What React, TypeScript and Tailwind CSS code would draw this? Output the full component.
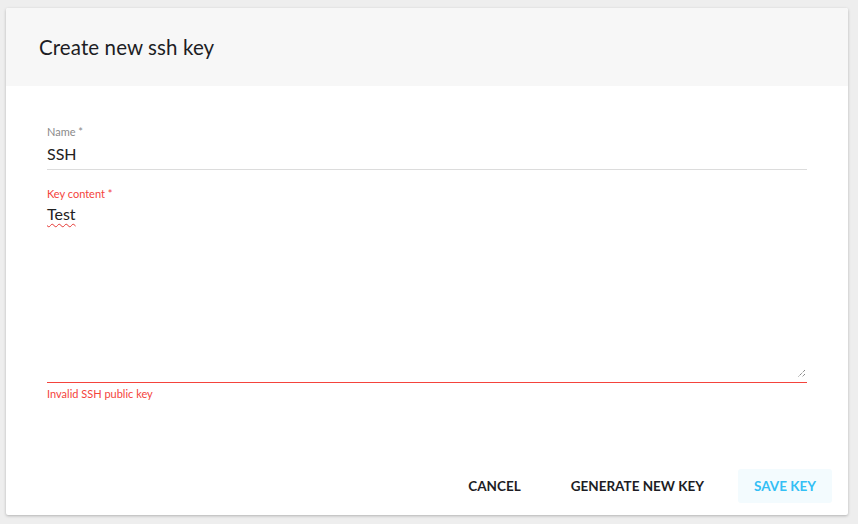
import React from 'react';

const font = { fontFamily: 'Lato, "Open Sans", Arial, sans-serif' };

function ResizeHandle() {
  return (
    <svg width="9" height="9" viewBox="0 0 9 9" className="absolute right-[1px] bottom-[4px]">
      <path d="M8 1 L1 8 M8 5 L5 8" stroke="#555" strokeWidth="1" strokeDasharray="1 1" fill="none" />
    </svg>
  );
}

export default function App() {
  return (
    <div className="min-h-[524px] w-[858px] bg-[#eeeeee] pt-[8px] pl-[6px]" style={font}>
      <div className="w-[842px] h-[507px] bg-white rounded-[2px] shadow-[0_1px_3px_rgba(0,0,0,0.25)] flex flex-col overflow-hidden">
        {/* header */}
        <div className="h-[78px] bg-[#f7f7f7] flex items-center px-[33px]">
          <h1 className="text-[20.5px] text-[#1d1d24] font-normal tracking-[0.1px]">Create new ssh key</h1>
        </div>

        {/* body */}
        <div className="flex-1 flex flex-col px-[41px] pt-[39px]">
          <div className="flex flex-col">
            <label className="text-[11px] leading-[13px] text-[#8a8a8a]">Name *</label>
            <div className="text-[16px] leading-[20px] text-[#222] mt-[6px] pb-[5px] border-b border-[#dcdcdc]">SSH</div>
          </div>

          <div className="flex flex-col mt-[17px]">
            <label className="text-[11px] leading-[13px] text-[#f4433c]">Key content *</label>
            <div className="relative h-[181px] mt-[2px] border-b border-[#f4433c]">
              <span className="text-[16px] leading-[20px] text-[#222] underline decoration-wavy decoration-[#e53935] decoration-1 underline-offset-[3px]">Test</span>
              <ResizeHandle />
            </div>
            <div className="text-[11px] leading-[13px] text-[#f4433c] mt-[4px]">Invalid SSH public key</div>
          </div>
        </div>

        {/* actions */}
        <div className="flex justify-end items-center gap-[18px] pr-[16px] pb-[12px]">
          <button className="h-[34px] px-4 text-[13.5px] font-bold text-[#1d1d24] uppercase rounded-[3px]">Cancel</button>
          <button className="h-[34px] px-4 text-[13.5px] font-bold text-[#1d1d24] uppercase rounded-[3px]">Generate new key</button>
          <button className="h-[34px] px-4 text-[13.5px] font-bold text-[#33bff5] uppercase rounded-[3px] bg-[#f3fbfe]">Save key</button>
        </div>
      </div>
    </div>
  );
}
